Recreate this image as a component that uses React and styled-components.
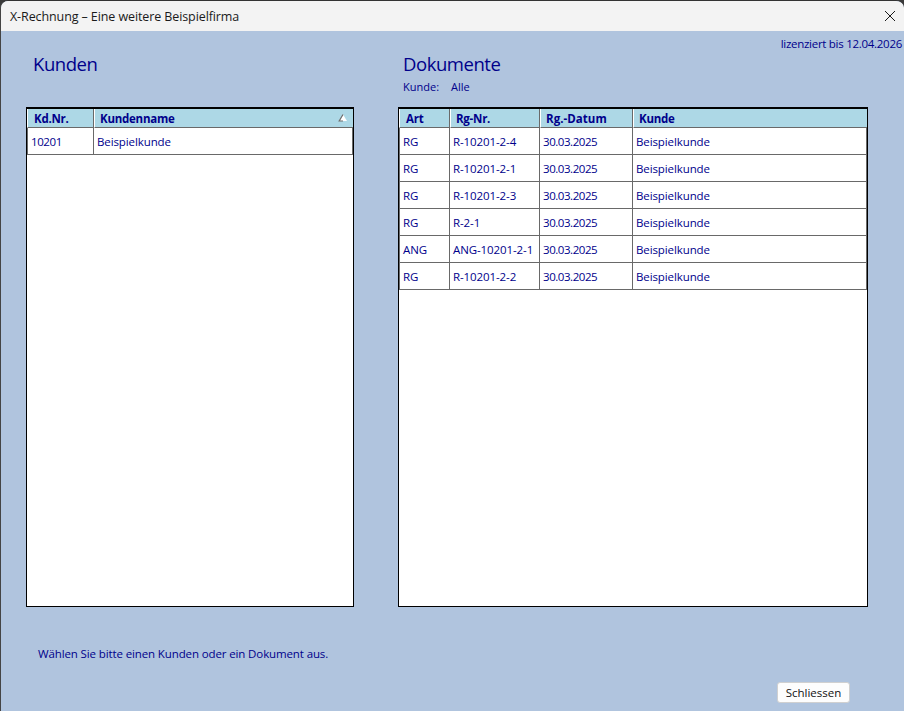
import React from "react";
import styled, { createGlobalStyle } from "styled-components";

const Global = createGlobalStyle`
  html, body { margin: 0; padding: 0; background: #3a3a3a; }
  body { width: 904px; height: 711px; overflow: hidden; font-family: "Open Sans", "Noto Sans", sans-serif; }
`;
const Window = styled.div`
  width: 904px; height: 711px; box-sizing: border-box;
  border-top: 1px solid #333; border-left: 1px solid #444;
  border-radius: 8px 8px 0 0; overflow: hidden;
  background: #b0c4de; display: flex; flex-direction: column;
`;
const TitleBar = styled.div`
  height: 30px; flex: none; background: #f3f3f3; display: flex; align-items: center;
  justify-content: space-between; padding: 0 8px 0 9px; color: #1a1a1a; font-size: 12.5px; letter-spacing: -0.1px;
`;
const CloseBtn = styled.svg` width: 12px; height: 12px; stroke: #1a1a1a; stroke-width: 1; fill: none; `;
const Licence = styled.div`
  height: 14px; margin-top: 6px; padding-right: 2px; text-align: right; font-size: 11.5px; line-height: 14px; color: #00008b; letter-spacing: -0.28px;
`;
const Panels = styled.div`
  display: grid; grid-template-columns: 328px 470px; column-gap: 44px; padding-left: 25px;
`;
const PanelHead = styled.div`
  height: 56px; padding-left: ${p => p.$indent}px; box-sizing: border-box; padding-top: 3px; color: #00008b;
`;
const Heading = styled.div` font-size: 18.5px; line-height: 20px; letter-spacing: -0.45px; `;
const Filter = styled.div`
  display: flex; gap: 12px; font-size: 11px; line-height: 14px; margin-top: 6px; letter-spacing: 0;
`;
const TableBox = styled.div`
  height: 500px; box-sizing: border-box; background: #fff; border: 1px solid #000; border-top-width: 2px;
`;
const Grid = styled.table`
  width: 100%; table-layout: fixed; border-collapse: separate; border-spacing: 0;
`;
const Head = styled.th`
  position: relative; height: 19px; padding: 0 0 0 ${p => p.$pad ?? 5}px; box-sizing: border-box; background: #add8e6; text-align: left;
  font-size: 11.5px; font-weight: 700; color: #00008b; letter-spacing: ${p => p.$spacing ?? -0.25}px;
  border-bottom: 1px solid #696969;
  border-left: 1px solid #fff;
`;
const Sep = styled.span`
  position: absolute; left: -2px; top: 0; bottom: 0; width: 1px; background: #696969;
`;
const Cell = styled.td`
  height: 27px; padding: 0 0 0 3px; box-sizing: border-box; font-size: 11.5px; color: #00008b; white-space: nowrap; overflow: hidden;
  letter-spacing: ${p => p.$spacing ?? -0.1}px;
  border-bottom: 1px solid #696969; border-right: 1px solid #696969;
  &:first-child { border-left: 1px solid #696969; }
`;
const SortMark = styled.svg` position: absolute; right: 5px; top: 4px; width: 10px; height: 9px; `;
const Message = styled.div`
  margin-top: 39px; padding-left: 37px; font-size: 11.5px; line-height: 16px; color: #00008b; letter-spacing: -0.12px;
`;
const Footer = styled.div` display: flex; justify-content: flex-end; padding: 20px 54px 0 0; `;
const Button = styled.button`
  width: 73px; height: 21px; padding: 0; background: #fdfdfd; border: 1px solid #d0d0d0; border-radius: 3px;
  font-family: inherit; font-size: 11.5px; color: #111; letter-spacing: 0;
`;

const docs = [
  ["RG", "R-10201-2-4"], ["RG", "R-10201-2-1"], ["RG", "R-10201-2-3"],
  ["RG", "R-2-1"], ["ANG", "ANG-10201-2-1"], ["RG", "R-10201-2-2"],
];

export default function App() {
  return (
    <Window>
      <Global />
      <TitleBar>
        <span>X-Rechnung – Eine weitere Beispielfirma</span>
        <CloseBtn viewBox="0 0 12 12"><path d="M1 1l10 10M11 1L1 11" /></CloseBtn>
      </TitleBar>
      <Licence>lizenziert bis 12.04.2026</Licence>
      <Panels>
        <div>
          <PanelHead $indent={7}><Heading>Kunden</Heading></PanelHead>
          <TableBox>
            <Grid>
              <colgroup><col style={{ width: 67 }} /><col /></colgroup>
              <thead><tr>
                <Head $pad={6}>Kd.Nr.</Head>
                <Head><Sep />Kundenname
                  <SortMark viewBox="0 0 10 9"><path d="M5 1.5L1 8h8z" fill="#fff" /><path d="M5 1.5L1.2 8H5" fill="none" stroke="#6e6e6e" strokeWidth="1.2" /></SortMark>
                </Head>
              </tr></thead>
              <tbody><tr><Cell $spacing={-0.4}>10201</Cell><Cell>Beispielkunde</Cell></tr></tbody>
            </Grid>
          </TableBox>
        </div>
        <div>
          <PanelHead $indent={5}>
            <Heading>Dokumente</Heading>
            <Filter><span>Kunde:</span><span>Alle</span></Filter>
          </PanelHead>
          <TableBox>
            <Grid>
              <colgroup><col style={{ width: 51 }} /><col style={{ width: 90 }} /><col style={{ width: 93 }} /><col /></colgroup>
              <thead><tr>
                <Head $pad={6}>Art</Head>
                <Head><Sep />Rg-Nr.</Head>
                <Head $spacing={0.05}><Sep />Rg.-Datum</Head>
                <Head><Sep />Kunde</Head>
              </tr></thead>
              <tbody>
                {docs.map(([art, nr]) => (
                  <tr key={nr}>
                    <Cell>{art}</Cell><Cell>{nr}</Cell><Cell $spacing={-0.45}>30.03.2025</Cell><Cell>Beispielkunde</Cell>
                  </tr>
                ))}
              </tbody>
            </Grid>
          </TableBox>
        </div>
      </Panels>
      <Message>Wählen Sie bitte einen Kunden oder ein Dokument aus.</Message>
      <Footer><Button>Schliessen</Button></Footer>
    </Window>
  );
}
